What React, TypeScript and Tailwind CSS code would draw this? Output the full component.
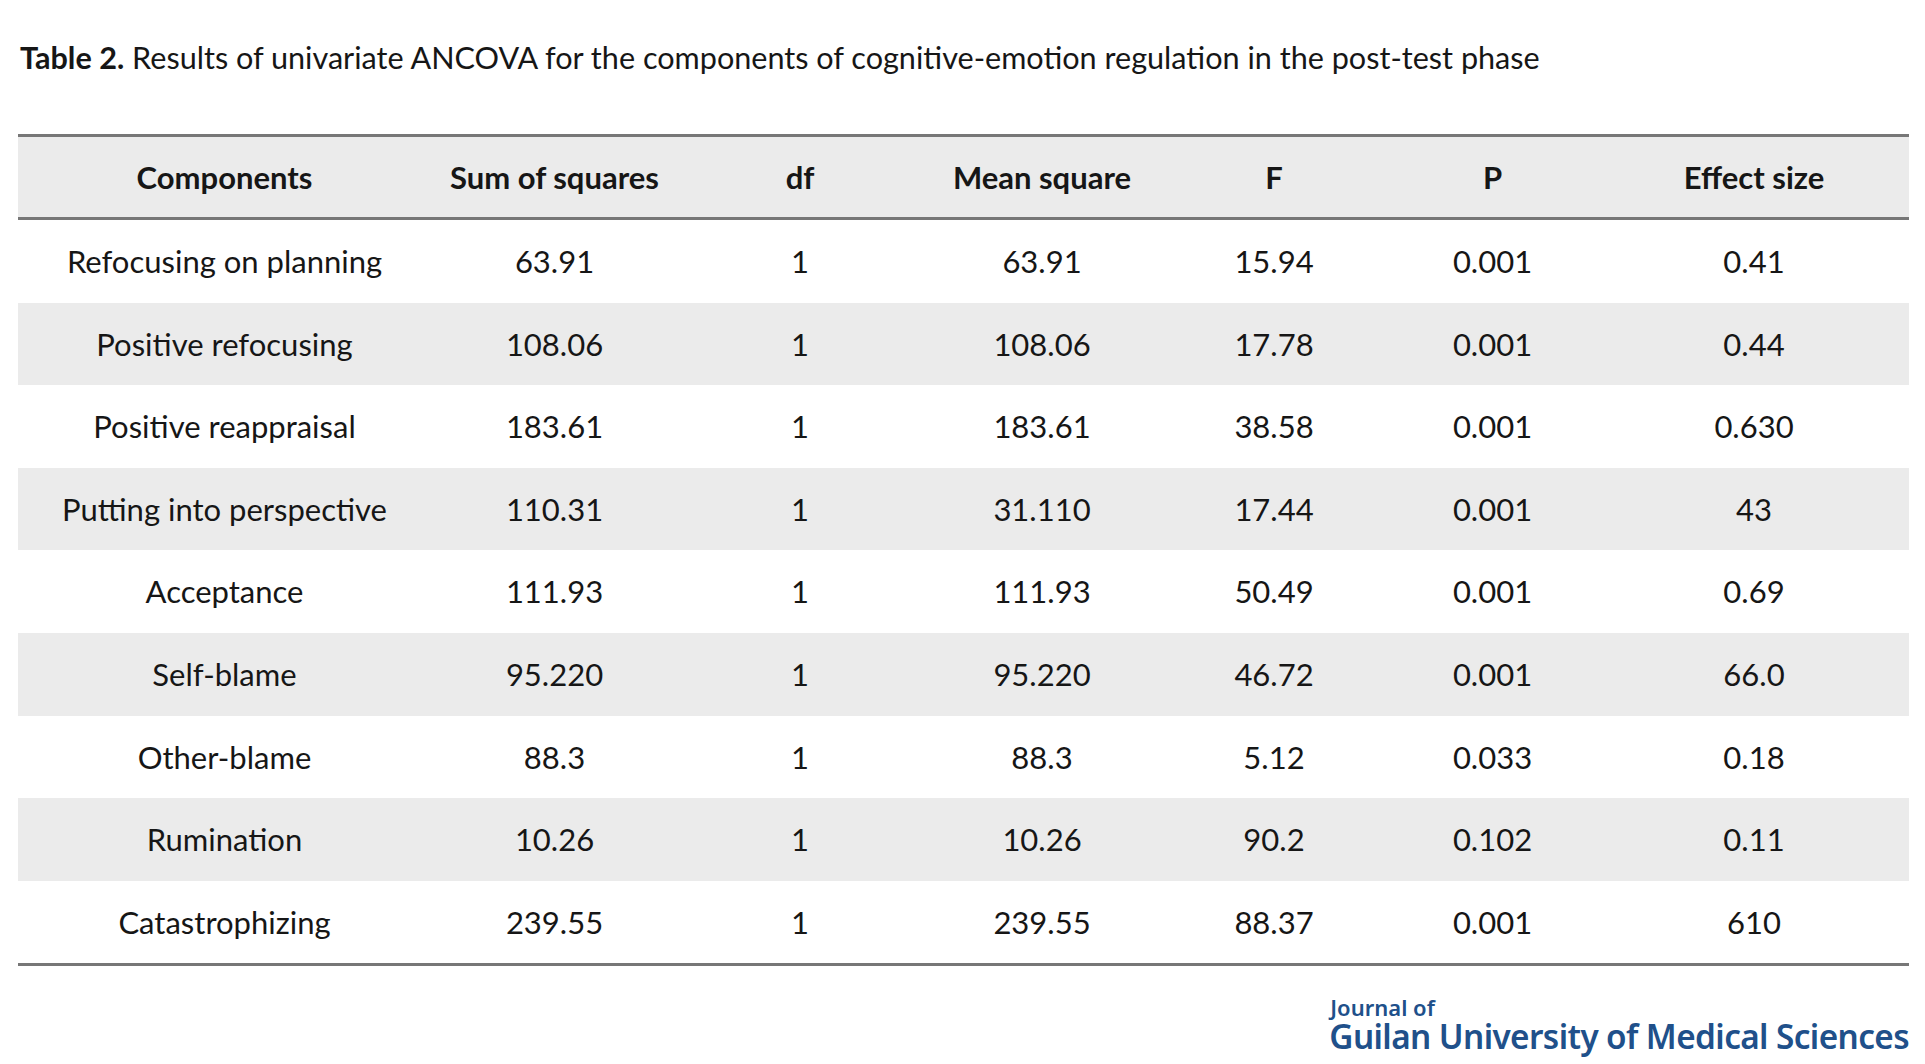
import React from 'react';

type Row = [string, string, string, string, string, string, string];

const rows: Row[] = [
  ['Refocusing on planning', '63.91', '1', '63.91', '15.94', '0.001', '0.41'],
  ['Positive refocusing', '108.06', '1', '108.06', '17.78', '0.001', '0.44'],
  ['Positive reappraisal', '183.61', '1', '183.61', '38.58', '0.001', '0.630'],
  ['Putting into perspective', '110.31', '1', '31.110', '17.44', '0.001', '43'],
  ['Acceptance', '111.93', '1', '111.93', '50.49', '0.001', '0.69'],
  ['Self-blame', '95.220', '1', '95.220', '46.72', '0.001', '66.0'],
  ['Other-blame', '88.3', '1', '88.3', '5.12', '0.033', '0.18'],
  ['Rumination', '10.26', '1', '10.26', '90.2', '0.102', '0.11'],
  ['Catastrophizing', '239.55', '1', '239.55', '88.37', '0.001', '610'],
];

const headers = ['Components', 'Sum of squares', 'df', 'Mean square', 'F', 'P', 'Effect size'];

const cols = 'grid grid-cols-[413px_247px_244px_240px_224px_213px_310px]';

export default function App() {
  return (
    <div className="min-h-screen w-[1925px] bg-white pt-[39px] pl-[18px] text-[#161616] font-['Lato','Liberation_Sans',sans-serif]">
      {/* Caption */}
      <p className="pl-[2px] text-[30.6px] leading-[38px]">
        <span className="font-bold">Table 2.</span> Results of univariate ANCOVA for the components of
        cognitive-emotion regulation in the post-test phase
      </p>

      {/* Table */}
      <div className="mt-[57px] w-[1891px] border-t-[3px] border-b-[3px] border-[#777777]">
        <div className={`${cols} h-[83px] items-center border-b-[3px] border-[#777777] bg-[#ebebeb] text-[31px] font-bold`}>
          {headers.map((h) => (
            <div key={h} className="text-center">
              {h}
            </div>
          ))}
        </div>
        {rows.map((r, i) => (
          <div
            key={r[0]}
            className={`${cols} h-[82.6px] items-center text-[31px] ${i % 2 === 1 ? 'bg-[#ebebeb]' : 'bg-white'}`}
          >
            {r.map((c, j) => (
              <div key={j} className="text-center">
                {c}
              </div>
            ))}
          </div>
        ))}
      </div>

      {/* Journal logo */}
      <div className="mt-[30px] flex w-[1891px] justify-end">
        <div className="flex flex-col text-[#20508a] font-['Noto_Sans',sans-serif]">
          <span className="pl-[1px] text-[22px] font-semibold leading-[22px]">Journal of</span>
          <span className="text-[33.3px] font-semibold leading-[36px] tracking-[-0.6px]">
            Guilan University of Medical Sciences
          </span>
        </div>
      </div>
    </div>
  );
}
